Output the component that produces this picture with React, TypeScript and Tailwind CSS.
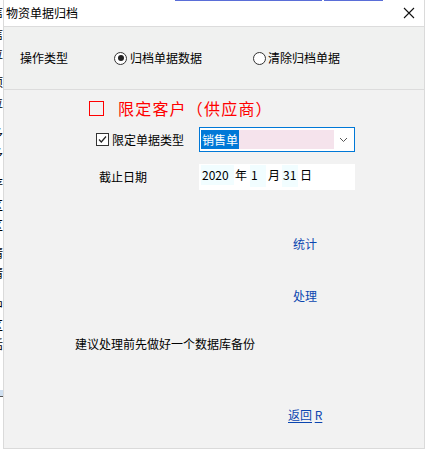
import React from "react";

const font = { fontFamily: '"Noto Sans CJK SC", "Noto Sans", sans-serif' };

function LeftStrip() {
  const rows = [
    { y: 5, c: "信" },
    { y: 27, c: "信" },
    { y: 47, c: "位" },
    { y: 75, c: "项" },
    { y: 96, c: "位" },
    { y: 126, c: "多" },
    { y: 146, c: "多" },
    { y: 176, c: "存" },
    { y: 198, c: "区" },
    { y: 218, c: "区" },
    { y: 246, c: "请" },
    { y: 266, c: "请" },
    { y: 298, c: "中" },
    { y: 318, c: "区" },
    { y: 337, c: "话" },
  ];
  return (
    <div className="relative w-[3px] h-full overflow-hidden bg-white shrink-0">
      {rows.map((r, i) => (
        <div
          key={i}
          className="absolute left-[-9px] text-[12px] leading-[14px] text-black"
          style={{ top: r.y }}
        >
          {r.c}
        </div>
      ))}
      <div className="absolute left-0 top-[390px] w-[3px] h-[6px] bg-[#cfdff0]" />
      <div className="absolute left-0 top-[396px] w-[3px] h-[1px] bg-[#555]" />
    </div>
  );
}

function Radio({ checked }: { checked: boolean }) {
  return (
    <span className="w-[13px] h-[13px] rounded-full border border-[#333] bg-white flex items-center justify-center shrink-0">
      {checked && <span className="w-[6px] h-[6px] rounded-full bg-[#222]" />}
    </span>
  );
}

export default function App() {
  return (
    <div className="w-[428px] h-[452px] bg-white flex relative" style={font}>
      <LeftStrip />
      <div className="w-[422px] h-[449px] bg-[#f2f2f2] border-l border-r border-b border-[#dadada] flex flex-col text-[12px] text-black">
        {/* title bar */}
        <div className="h-[26px] bg-white flex items-center justify-between pl-[2px] pr-[8px] shrink-0">
          <span className="text-[12px] leading-[14px] mt-[-1px]">物资单据归档</span>
          <svg width="12" height="12" viewBox="0 0 12 12" className="mr-[1px]">
            <path d="M1 1 L11 11 M11 1 L1 11" stroke="#111" strokeWidth="1.1" fill="none" />
          </svg>
        </div>
        {/* operation type group */}
        <div className="h-[64px] bg-[#f0f1f0] border-t border-b border-[#dcdcdc] flex items-center shrink-0">
          <span className="ml-[16px] w-[94px] leading-[14px]">操作类型</span>
          <div className="flex items-center gap-[3px] w-[141px]">
            <Radio checked />
            <span className="leading-[14px]">归档单据数据</span>
          </div>
          <div className="flex items-center gap-[2px] ml-[-2px]">
            <Radio checked={false} />
            <span className="leading-[14px]">清除归档单据</span>
          </div>
        </div>

        {/* red checkbox row */}
        <div className="flex items-center mt-[10px] h-[17px] pl-[85px]">
          <span className="w-[15px] h-[15px] border-[1.5px] border-[#ff0000] shrink-0" />
          <span className="ml-[14px] text-[16px] leading-[17px] tracking-[1.2px] text-[#ff0000]">
            限定客户（供应商）
          </span>
        </div>

        {/* document type row */}
        <div className="flex items-center mt-[10px] h-[25px]">
          <div className="flex items-center pl-[92px] w-[195px]">
            <span className="w-[13px] h-[13px] border border-[#333] bg-white flex items-center justify-center shrink-0">
              <svg width="11" height="11" viewBox="0 0 11 11">
                <path d="M2 5.5 L4.3 8 L9 2.5" stroke="#222" strokeWidth="1.2" fill="none" />
              </svg>
            </span>
            <span className="ml-[3px] leading-[14px]">限定单据类型</span>
          </div>
          <div className="w-[156px] h-[25px] border border-[#0078d7] bg-white flex items-center pl-[1px] pr-[6px]">
            <div className="w-[133px] h-[19px] bg-[#f5e3ec] flex items-center">
              <span className="bg-[#0078d7] text-white h-[19px] leading-[19px] px-[1px] text-[12px]">销售单</span>
            </div>
            <div className="flex-1 flex justify-end">
              <svg width="9" height="6" viewBox="0 0 9 6">
                <path d="M1 1 L4.5 4.5 L8 1" stroke="#555" strokeWidth="1" fill="none" />
              </svg>
            </div>
          </div>
        </div>

        {/* date row */}
        <div className="flex items-center mt-[12px] h-[26px]">
          <span className="pl-[95px] w-[195px] leading-[14px]">截止日期</span>
          <div className="w-[156px] h-[26px] bg-white flex items-start pl-[2px] pt-[1px]">
            <span className="w-[33px] h-[20px] bg-[#f1fdff] leading-[20px] pl-[1px]">2020</span>
            <span className="w-[16px] h-[20px] leading-[20px] pl-[1px]">年</span>
            <span className="w-[16px] h-[22px] bg-[#f1fdff] leading-[20px] pl-[1px]">1</span>
            <span className="w-[16px] h-[20px] leading-[20px] pl-[2px]">月</span>
            <span className="w-[16px] h-[22px] bg-[#f1fdff] leading-[20px] pl-[1px]">31</span>
            <span className="w-[16px] h-[20px] leading-[20px] pl-[2px]">日</span>
          </div>
        </div>

        {/* action links */}
        <div className="mt-[47px] pl-[289px] leading-[14px] text-[#0b46b0]">统计</div>
        <div className="mt-[38px] pl-[289px] leading-[14px] text-[#0b46b0]">处理</div>

        <div className="mt-[34px] pl-[71px] leading-[14px]">建议处理前先做好一个数据库备份</div>

        <div className="mt-[57px] pl-[284px] leading-[14px] text-[#0b46b0]">
          <span className="underline underline-offset-2">返回</span>{" "}
          <span className="underline underline-offset-2">R</span>
        </div>
      </div>
      <div className="absolute top-0 left-[175px] w-[147px] h-[1px] bg-[#5a6ed8]" />
      <div className="absolute top-0 left-[324px] w-[59px] h-[1px] bg-[#5a6ed8]" />
    </div>
  );
}
